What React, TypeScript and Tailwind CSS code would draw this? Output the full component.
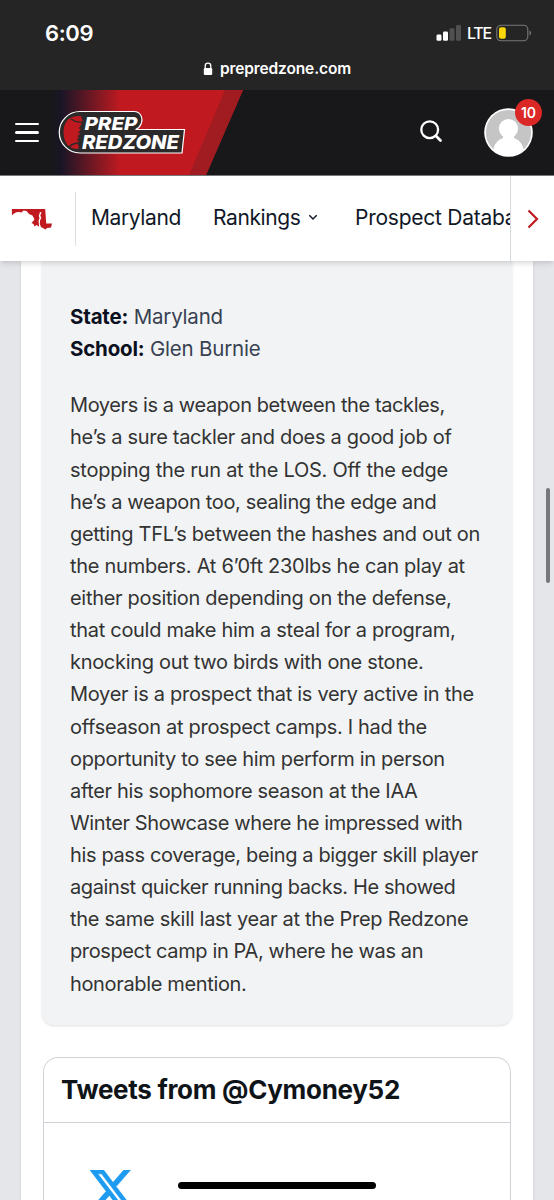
// text and tracking (px) for each line of the write-up
const bioLines: [string, number][] = [
    ["Moyers is a weapon between the tackles,", -0.41],
    ["he’s a sure tackler and does a good job of", -0.31],
    ["stopping the run at the LOS. Off the edge", -0.25],
    ["he’s a weapon too, sealing the edge and", -0.34],
    ["getting TFL’s between the hashes and out on", -0.31],
    ["the numbers. At 6’0ft 230lbs he can play at", -0.27],
    ["either position depending on the defense,", -0.3],
    ["that could make him a steal for a program,", -0.3],
    ["knocking out two birds with one stone.", -0.31],
    ["Moyer is a prospect that is very active in the", -0.29],
    ["offseason at prospect camps. I had the", -0.31],
    ["opportunity to see him perform in person", -0.33],
    ["after his sophomore season at the IAA", -0.35],
    ["Winter Showcase where he impressed with", -0.39],
    ["his pass coverage, being a bigger skill player", -0.36],
    ["against quicker running backs. He showed", -0.4],
    ["the same skill last year at the Prep Redzone", -0.29],
    ["prospect camp in PA, where he was an", -0.38],
    ["honorable mention.", -0.35],
];

function StatusBar() {
    return (
        <div className="h-[90px] shrink-0 bg-[#252525] text-white">
            <div className="flex h-[58px] items-center justify-between pl-[45px] pr-[22px] pt-2">
                <span className="text-[22px] font-semibold leading-none tracking-[-0.4px]">6:09</span>
                <div className="flex items-center gap-[5px]">
                    <svg width="26" height="16" viewBox="0 0 26 16">
                        <rect x="0.5" y="9.5" width="5" height="6.3" rx="1.3" fill="#fff" />
                        <rect x="7" y="6.5" width="5" height="9.3" rx="1.3" fill="#fff" />
                        <rect x="13.5" y="3.2" width="5" height="12.6" rx="1.3" fill="#505050" />
                        <rect x="20" y="0" width="5" height="15.8" rx="1.3" fill="#505050" />
                    </svg>
                    <span className="w-[24px] whitespace-nowrap text-[16px] font-medium leading-none tracking-[-1.2px]">LTE</span>
                    <svg width="36" height="18" viewBox="0 0 36 18">
                        <rect x="0.8" y="1.2" width="31" height="15.6" rx="4.2" fill="none" stroke="#777" strokeWidth="1.1" />
                        <rect x="3" y="3.3" width="6.8" height="11.4" rx="2" fill="#fdd60a" />
                        <path d="M33.5 6.5c2 .8 2 4.2 0 5z" fill="#777" />
                    </svg>
                </div>
            </div>
            <div className="flex items-center justify-center gap-[7px] pt-px">
                <svg width="10" height="14" viewBox="0 0 10 14">
                    <path d="M2.2 6.5V4a2.8 2.8 0 0 1 5.6 0v2.5" fill="none" stroke="#fff" strokeWidth="1.3" />
                    <rect x="0.8" y="6" width="8.4" height="7" rx="1.3" fill="#fff" />
                </svg>
                <span className="text-[15.5px] font-semibold leading-5 tracking-[-0.12px]">prepredzone.com</span>
            </div>
        </div>
    );
}

function Logo() {
    return (
        <svg className="self-start" width="203" height="85" viewBox="0 0 203 85">
            <defs>
                <linearGradient id="fade" x1="0" x2="1" y1="0" y2="0">
                    <stop offset="0" stopColor="#18181b" />
                    <stop offset="0.05" stopColor="#191526" />
                    <stop offset="0.36" stopColor="#c01a20" />
                    <stop offset="1" stopColor="#c01a20" />
                </linearGradient>
            </defs>
            <path d="M12 0h191l-37 85H12z" fill="url(#fade)" />
            <path d="M185 0h18l-37 85h-17z" fill="#a01c20" />
            <g transform="translate(-40 -90)">
                <path
                    d="M80 111.5H134C140.5 111.5 143.5 118 141 124Q139.500 128 135.500 129.500H184.500L182 153H80A20.700 20.700 0 0 1 80 111.500z"
                    fill="#2b2929"
                    stroke="#fff"
                    strokeWidth="1.2"
                />
                <path d="M81 116Q64 115 63.500 132Q64 149 78 149L79 146L77.500 145L79.500 140L78 139L80 134L79 133L81 128L80 127L82.500 121z" fill="#c01a20" />
                <path d="M71 119Q76 123 82 122M69 147Q73 143 79 143M79 128h4M78.500 132h4M77.500 136h4M77 140h4" fill="none" stroke="#2b2929" strokeWidth="1.3" />
                <g fill="#fff" fontFamily="Inter, sans-serif" fontWeight="800" fontStyle="italic">
                    <text x="84.500" y="130" fontSize="18" textLength="53" lengthAdjust="spacingAndGlyphs">PREP</text>
                    <text x="82" y="148.800" fontSize="19" textLength="97" lengthAdjust="spacingAndGlyphs">REDZONE</text>
                </g>
            </g>
        </svg>
    );
}

function Header() {
    return (
        <header className="flex h-[86px] shrink-0 items-center border-b border-[#77777a] bg-[#18181b]">
            <button className="ml-[15px] flex w-[25px] flex-col gap-[6px]" aria-label="Menu">
                <span className="h-[2.400px] w-6 rounded bg-white" />
                <span className="h-[2.400px] w-6 rounded bg-white" />
                <span className="h-[2.400px] w-6 rounded bg-white" />
            </button>
            <Logo />
            <button className="ml-[176px] pb-1" aria-label="Search">
                <svg width="24" height="24" viewBox="0 0 24 24" fill="none" stroke="#fff" strokeWidth="2.300" strokeLinecap="round">
                    <circle cx="10.700" cy="10.700" r="8.400" />
                    <path d="M17 17l4.500 4.500" strokeWidth="2.800" />
                </svg>
            </button>
            <div className="relative ml-[41px]">
                <svg width="49" height="49" viewBox="0 0 49 49">
                    <clipPath id="face">
                        <circle cx="24.500" cy="24.500" r="23.500" />
                    </clipPath>
                    <circle cx="24.500" cy="24.500" r="24.300" fill="#fff" />
                    <circle cx="24.500" cy="24.500" r="22.600" fill="#c5c5c5" />
                    <g clipPath="url(#face)" fill="#fff">
                        <circle cx="24.500" cy="20.500" r="9.600" />
                        <path d="M19 26h11v4c6 2 9 7 10 13v6H9v-6c1-6 4-11 10-13z" />
                    </g>
                </svg>
                <span className="absolute -top-[9px] left-[31px] flex h-[27px] w-[27px] items-center justify-center rounded-full bg-[#dc2727] text-[14px] font-semibold text-white">
                    10
                </span>
            </div>
        </header>
    );
}

function SubNav() {
    return (
        <nav className="relative z-10 flex h-[85px] shrink-0 items-center bg-white text-[21px] tracking-[-0.4px] text-[#111827] shadow-md">
            <svg className="ml-[11px] shrink-0" width="42" height="22" viewBox="0 0 42 22">
                <path
                    d="M.8 1H34.200L35.200 15.500H41L40 19.500L36 20L34.500 21.500L30 19L28.800 16L29 12.500L30.300 10L29.300 7.500L30.500 4.500L29 4L27.800 8L28.500 10L27.500 13L28.200 18.800L25.500 17L23.500 18.500L22.500 16L20.500 15L23.500 11.500L21.500 7.500L18 6L15.500 3L12.500 2.500L10.500 4.500L8 4L5.500 4.300L3 5.500L1 7.200z"
                    fill="#c01a20"
                />
            </svg>
            <span className="ml-[22px] h-[54px] w-px shrink-0 bg-[#dddfe4]" />
            <div className="flex flex-1 items-center overflow-hidden whitespace-nowrap pb-0.5 pl-[15px]">
                <a className="w-[122px] shrink-0">Maryland</a>
                <a className="flex w-[142px] shrink-0 items-center gap-2">
                    Rankings
                    <svg width="10" height="7" viewBox="0 0 10 7" fill="none" stroke="#111827" strokeWidth="1.500">
                        <path d="M1.300 1.300L5 5l3.700-3.700" />
                    </svg>
                </a>
                <a className="shrink-0 tracking-[-0.250px]">Prospect Database</a>
            </div>
            <button className="flex h-full w-[44px] shrink-0 items-center justify-center border-l border-[#d5d8dd]" aria-label="Next">
                <svg width="12" height="20" viewBox="0 0 12 20" fill="none" stroke="#c01a20" strokeWidth="2.200">
                    <path d="M1.500 1.500L10 10l-8.500 8.500" />
                </svg>
            </button>
        </nav>
    );
}

export default function App() {
    return (
        <div className="relative flex h-[1200px] w-[554px] flex-col overflow-hidden bg-[#e5e6ea] font-['Inter',sans-serif]">
            <StatusBar />
            <Header />
            <SubNav />
            <main className="ml-[21px] h-[939px] w-[512px] bg-white px-[21px] shadow-sm">
                {/* Prospect card */}
                <section className="h-[764px] w-[470px] rounded-b-[12px] bg-[#f2f3f5] pl-7 pt-10 text-[20.500px] leading-[32.125px] shadow">
                    <div className="tracking-[-0.200px] text-[#374151]">
                        <p><b className="font-bold text-[#0b1020]">State:</b> Maryland</p>
                        <p><b className="font-bold text-[#0b1020]">School:</b> Glen Burnie</p>
                    </div>
                    <p className="mt-6 whitespace-nowrap text-[20px] leading-[32.125px] text-[#333]">
                        {bioLines.map(([line, tracking]) => (
                            <span key={line} className="block" style={{ letterSpacing: tracking }}>{line}</span>
                        ))}
                    </p>
                </section>

                {/* Twitter timeline */}
                <section className="ml-px mt-8 h-[160px] w-[468px] rounded-t-[15px] border border-b-0 border-[#cfd3d7]">
                    <h2 className="flex h-[65px] items-center border-b border-[#cfd3d7] pb-0.5 pl-[17px] text-[26px] font-bold tracking-[-0.300px] text-[#0f1419]">
                        Tweets from @Cymoney52
                    </h2>
                    <svg className="ml-[46px] mt-[47px]" width="43" height="39" viewBox="26.800 48 460.200 416" fill="#1d9bf0" stroke="#1d9bf0" strokeWidth="8">
                        <path d="M389.200 48h70.600L305.600 224.200 487 464H345L233.700 318.600 106.500 464H35.800L200.700 275.500 26.800 48H172.400L272.900 180.900 389.200 48zM364.400 421.800h39.100L151.100 88h-42L364.400 421.800z" />
                    </svg>
                </section>
            </main>
            <span className="absolute left-[546px] top-[488px] h-[95px] w-1 rounded-full bg-[#77787b]" />
            <span className="absolute bottom-[11px] left-[178px] h-[7px] w-[198px] rounded-full bg-black" />
        </div>
    );
}
